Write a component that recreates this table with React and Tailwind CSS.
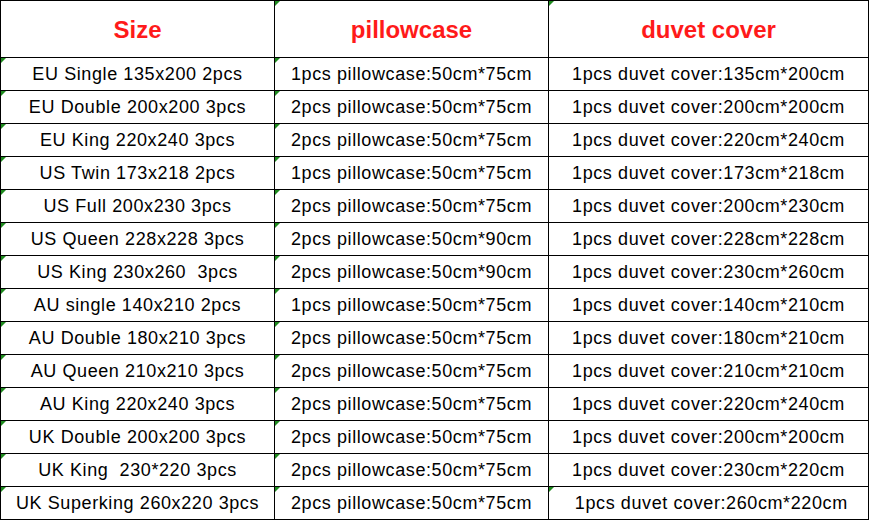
const ROWS = [
  ["EU Single 135x200 2pcs", "1pcs pillowcase:50cm*75cm", "1pcs duvet cover:135cm*200cm"],
  ["EU Double 200x200 3pcs", "2pcs pillowcase:50cm*75cm", "1pcs duvet cover:200cm*200cm"],
  ["EU King 220x240 3pcs", "2pcs pillowcase:50cm*75cm", "1pcs duvet cover:220cm*240cm"],
  ["US Twin 173x218 2pcs", "1pcs pillowcase:50cm*75cm", "1pcs duvet cover:173cm*218cm"],
  ["US Full 200x230 3pcs", "2pcs pillowcase:50cm*75cm", "1pcs duvet cover:200cm*230cm"],
  ["US Queen 228x228 3pcs", "2pcs pillowcase:50cm*90cm", "1pcs duvet cover:228cm*228cm"],
  ["US King 230x260  3pcs", "2pcs pillowcase:50cm*90cm", "1pcs duvet cover:230cm*260cm"],
  ["AU single 140x210 2pcs", "1pcs pillowcase:50cm*75cm", "1pcs duvet cover:140cm*210cm"],
  ["AU Double 180x210 3pcs", "2pcs pillowcase:50cm*75cm", "1pcs duvet cover:180cm*210cm"],
  ["AU Queen 210x210 3pcs", "2pcs pillowcase:50cm*75cm", "1pcs duvet cover:210cm*210cm"],
  ["AU King 220x240 3pcs", "2pcs pillowcase:50cm*75cm", "1pcs duvet cover:220cm*240cm"],
  ["UK Double 200x200 3pcs", "2pcs pillowcase:50cm*75cm", "1pcs duvet cover:200cm*200cm"],
  ["UK King  230*220 3pcs", "2pcs pillowcase:50cm*75cm", "1pcs duvet cover:230cm*220cm"],
  ["UK Superking 260x220 3pcs", "2pcs pillowcase:50cm*75cm", " 1pcs duvet cover:260cm*220cm"],
];

function Mark() {
  // little green comment triangle in the cell's top-left corner
  return (
    <span className="absolute left-0 top-0 w-0 h-0 border-t-[5px] border-r-[5px] border-t-[#1e8a1e] border-r-transparent" />
  );
}

function Cell({ children, mark, head }) {
  return (
    <div
      className={`relative flex items-center justify-center border-l border-t border-black whitespace-pre ${
        head ? "h-[57px] pt-[2px] text-[24px] font-bold text-[#ff1a1a]" : "h-[33px] pt-[1px] text-[18px] tracking-[0.6px] text-black"
      }`}
    >
      {mark && <Mark />}
      {children}
    </div>
  );
}

export default function App() {
  return (
    <div className="w-[870px] h-[521px] bg-white" style={{ fontFamily: '"Liberation Sans", Arial, sans-serif' }}>
      <div className="grid grid-cols-[274px_274px_320px] w-[869px] border-r border-b border-black">
        <Cell head>Size</Cell>
        <Cell head mark>pillowcase</Cell>
        <Cell head mark>duvet cover</Cell>
        {ROWS.map((r, i) => (
          <div key={i} className="contents">
            <Cell mark>{r[0]}</Cell>
            <Cell mark>{r[1]}</Cell>
            <Cell mark={i === ROWS.length - 1}>{r[2]}</Cell>
          </div>
        ))}
      </div>
    </div>
  );
}
